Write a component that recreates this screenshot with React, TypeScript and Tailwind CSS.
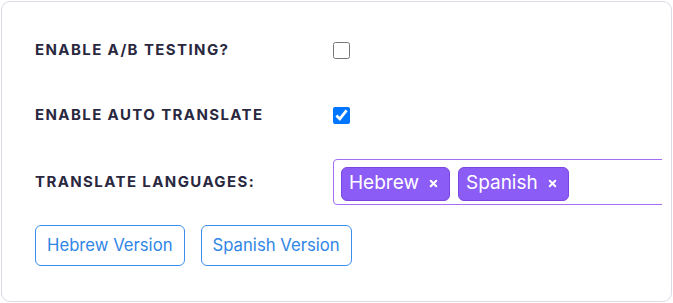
import { X } from "lucide-react";

function Tag({ label }: { label: string }) {
  return (
    <div className="flex h-[34px] items-center gap-[9px] rounded-[6px] border border-[#7a45e0] bg-[#8b5cf6] pl-[7px] pr-[10px] text-[19px] text-white">
      <span>{label}</span>
      <X className="h-[11px] w-[11px]" strokeWidth={4.5} />
    </div>
  );
}

function VersionButton({ label }: { label: string }) {
  return (
    <button className="h-[41px] rounded-[6px] border border-[#3b8eea] bg-white px-[11px] text-[16.7px] text-[#2f86e6]">
      {label}
    </button>
  );
}

const labelClass =
  "w-[298px] shrink-0 text-[15px] font-bold tracking-[1.4px] text-[#29283f]";

export default function App() {
  return (
    <div className="h-[303px] w-[673px] bg-white p-px font-['Inter',sans-serif]">
      <div className="h-full rounded-[9px] border border-[#dcdbe5] pl-[33px] pr-[9px] pt-[30px]">
        <div className="flex h-[36px] items-center">
          <span className={labelClass}>ENABLE A/B TESTING?</span>
          <input type="checkbox" className="m-0 h-[17px] w-[17px]" readOnly />
        </div>
        <div className="mt-[29px] flex h-[36px] items-center">
          <span className={labelClass}>ENABLE AUTO TRANSLATE</span>
          <input type="checkbox" className="m-0 h-[17px] w-[17px]" defaultChecked />
        </div>
        <div className="mt-[26px] flex h-[46px] items-center overflow-hidden">
          <span className={labelClass}>TRANSLATE LANGUAGES:</span>
          <div className="flex h-[46px] w-[400px] shrink-0 items-center gap-[8px] rounded-[4px] border border-[#a36ef5] px-[7px] pt-[3px]">
            <Tag label="Hebrew" />
            <Tag label="Spanish" />
          </div>
        </div>
        <div className="mt-[20px] flex gap-[16px]">
          <VersionButton label="Hebrew Version" />
          <VersionButton label="Spanish Version" />
        </div>
      </div>
    </div>
  );
}
